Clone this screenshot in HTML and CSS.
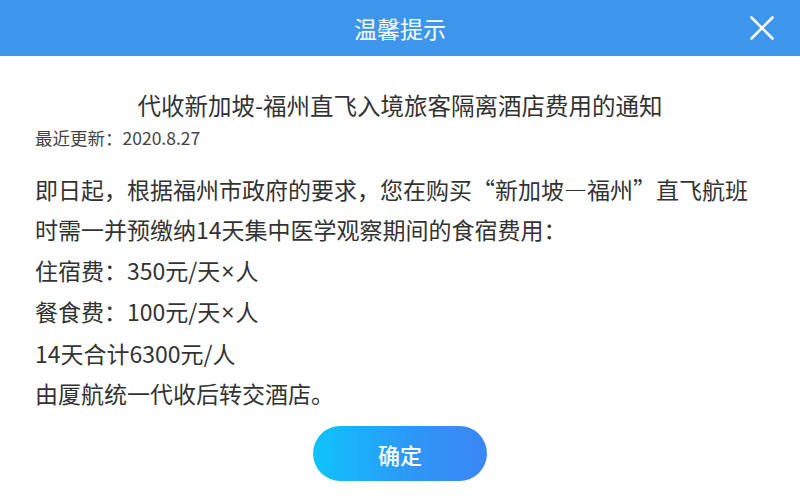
FILE: index.html
```html
<!DOCTYPE html>
<html lang="zh-CN">
<head>
<meta charset="utf-8">
<title>温馨提示</title>
<link rel="stylesheet" href="styles.css">
</head>
<body>
<div class="dialog">
  <header class="dialog-head">
    <span></span>
    <h1 class="dialog-title">温馨提示</h1>
    <button class="close" aria-label="关闭">
      <svg width="24" height="24" viewBox="0 0 24 24"><path d="M1.5 1.5 L22.5 22.5 M22.5 1.5 L1.5 22.5" stroke="#fff" stroke-width="2.6" stroke-linecap="round" fill="none"/></svg>
    </button>
  </header>
  <main class="dialog-body">
    <h2 class="notice-title">代收新加坡-福州直飞入境旅客隔离酒店费用的通知</h2>
    <p class="updated">最近更新：2020.8.27</p>
    <div class="notice-text">
      <p>即日起，根据福州市政府的要求，您在购买“新加坡—福州”直飞航班</p>
      <p>时需一并预缴纳14天集中医学观察期间的食宿费用：</p>
      <p>住宿费：350元/天<span class="times">×</span>人</p>
      <p>餐食费：100元/天<span class="times">×</span>人</p>
      <p>14天合计6300元/人</p>
      <p>由厦航统一代收后转交酒店。</p>
    </div>
    <div class="actions">
      <button class="confirm">确定</button>
    </div>
  </main>
</div>
</body>
</html>
```
FILE: styles.css
```css
html, body {
  margin: 0;
  padding: 0;
  background: #fff;
}
body {
  font-family: "Noto Sans CJK SC", "Noto Sans", sans-serif;
  color: #333;
}
.dialog {
  width: 800px;
  height: 496px;
  display: flex;
  flex-direction: column;
  background: #fff;
}
.dialog-head {
  height: 56px;
  flex: none;
  background: #3d96ec;
  display: grid;
  grid-template-columns: 1fr auto 1fr;
  align-items: center;
}
.dialog-title {
  margin: 0;
  font-size: 23px;
  font-weight: 400;
  color: #fff;
  line-height: 32px;
}
.close {
  justify-self: end;
  margin-right: 26px;
  padding: 0;
  border: 0;
  background: none;
  width: 24px;
  height: 24px;
  display: flex;
  cursor: pointer;
}
.dialog-body {
  padding: 33px 0 0 35px;
  display: flex;
  flex-direction: column;
}
.notice-title {
  margin: 0 35px 0 0;
  text-align: center;
  font-size: 23.5px;
  font-weight: 400;
  line-height: 32px;
  color: #333;
}
.updated {
  margin: 7px 0 0;
  font-size: 17.5px;
  line-height: 20px;
  color: #444;
}
.notice-text {
  margin-top: 21px;
}
.notice-text p {
  margin: 0;
  font-size: 23px;
  line-height: 40.4px;
  white-space: nowrap;
}
.times {
  font-family: "Noto Sans", sans-serif;
  margin: 0 1px;
}
.actions {
  margin: 13px 35px 0 0;
  display: flex;
  justify-content: center;
}
.confirm {
  width: 174px;
  height: 55px;
  border: 0;
  border-radius: 28px;
  background: linear-gradient(90deg, #0fc3fb 0%, #2f95f7 60%, #3b86f3 100%);
  color: #fff;
  font-family: inherit;
  font-size: 22px;
  font-weight: 500;
  cursor: pointer;
}
```
